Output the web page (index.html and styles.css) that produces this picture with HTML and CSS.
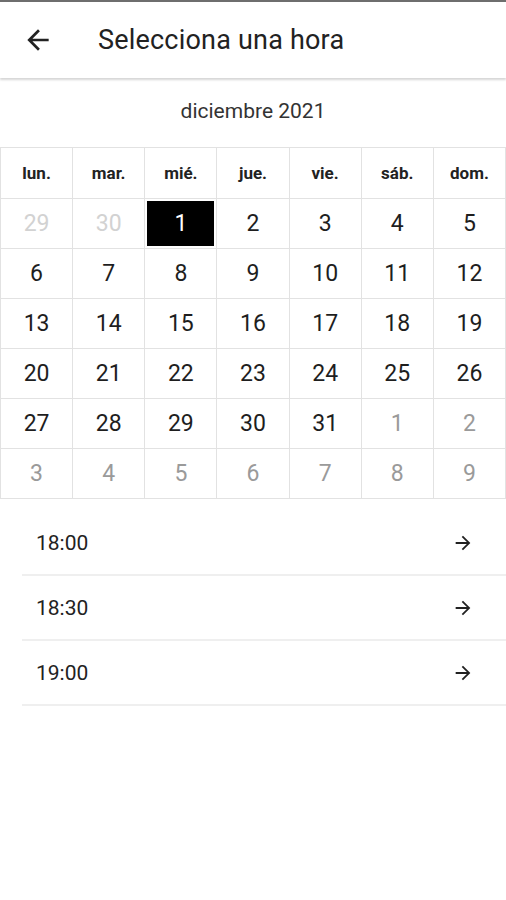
FILE: index.html
```html
<!DOCTYPE html>
<html lang="es">
<head>
  <meta charset="UTF-8">
  <meta name="viewport" content="width=device-width, initial-scale=1.0">
  <title>Selecciona una hora</title>
  <link rel="stylesheet" href="styles.css">
</head>
<body>

  <header class="topbar">
    <button class="back" aria-label="Volver">
      <svg width="32" height="32" viewBox="0 0 24 24"><path d="M20 11H7.83l5.59-5.59L12 4l-8 8 8 8 1.41-1.41L7.83 13H20v-2z" fill="#222"/></svg>
    </button>
    <h1>Selecciona una hora</h1>
  </header>

  <div class="month">diciembre 2021</div>

  <div class="calendar">
    <div class="dow">lun.</div>
    <div class="dow">mar.</div>
    <div class="dow">mié.</div>
    <div class="dow">jue.</div>
    <div class="dow">vie.</div>
    <div class="dow">sáb.</div>
    <div class="dow">dom.</div>

    <div class="day past">29</div>
    <div class="day past">30</div>
    <div class="day"><span class="selected">1</span></div>
    <div class="day">2</div>
    <div class="day">3</div>
    <div class="day">4</div>
    <div class="day">5</div>

    <div class="day">6</div>
    <div class="day">7</div>
    <div class="day">8</div>
    <div class="day">9</div>
    <div class="day">10</div>
    <div class="day">11</div>
    <div class="day">12</div>

    <div class="day">13</div>
    <div class="day">14</div>
    <div class="day">15</div>
    <div class="day">16</div>
    <div class="day">17</div>
    <div class="day">18</div>
    <div class="day">19</div>

    <div class="day">20</div>
    <div class="day">21</div>
    <div class="day">22</div>
    <div class="day">23</div>
    <div class="day">24</div>
    <div class="day">25</div>
    <div class="day">26</div>

    <div class="day">27</div>
    <div class="day">28</div>
    <div class="day">29</div>
    <div class="day">30</div>
    <div class="day">31</div>
    <div class="day other">1</div>
    <div class="day other">2</div>

    <div class="day other">3</div>
    <div class="day other">4</div>
    <div class="day other">5</div>
    <div class="day other">6</div>
    <div class="day other">7</div>
    <div class="day other">8</div>
    <div class="day other">9</div>
  </div>

  <ul class="times">
    <li><span>18:00</span><svg width="22" height="22" viewBox="0 0 24 24"><path d="M12 4l-1.41 1.41L16.17 11H4v2h12.17l-5.58 5.59L12 20l8-8z" fill="#222"/></svg></li>
    <li><span>18:30</span><svg width="22" height="22" viewBox="0 0 24 24"><path d="M12 4l-1.41 1.41L16.17 11H4v2h12.17l-5.58 5.59L12 20l8-8z" fill="#222"/></svg></li>
    <li><span>19:00</span><svg width="22" height="22" viewBox="0 0 24 24"><path d="M12 4l-1.41 1.41L16.17 11H4v2h12.17l-5.58 5.59L12 20l8-8z" fill="#222"/></svg></li>
  </ul>

</body>
</html>
```

FILE: styles.css
```css
body {
  margin: 0;
  font-family: Roboto, "Liberation Sans", sans-serif;
  background: #fff;
  color: #222;
}
.topbar {
  display: flex;
  align-items: center;
  height: 76px;
  border-top: 2px solid #6e6e6e;
  box-shadow: 0 2px 2px rgba(0,0,0,0.16);
  position: relative;
}
.back {
  background: none;
  border: none;
  padding: 0;
  margin-left: 22px;
  width: 32px;
  height: 32px;
  display: flex;
  cursor: pointer;
}
.topbar h1 {
  margin: 0 0 0 44px;
  font-size: 27px;
  font-weight: 400;
  letter-spacing: 0.2px;
  color: #222;
}
.month {
  height: 69px;
  line-height: 67px;
  text-align: center;
  font-size: 21px;
  color: #333;
}
.calendar {
  display: grid;
  grid-template-columns: repeat(7, 1fr);
  grid-template-rows: 51px repeat(6, 50px);
  border-top: 1px solid #e2e2e2;
  border-left: 1px solid #e2e2e2;
}
.dow, .day {
  display: flex;
  align-items: center;
  justify-content: center;
  border-right: 1px solid #e2e2e2;
  border-bottom: 1px solid #e2e2e2;
}
.dow {
  font-size: 17px;
  font-weight: 700;
  color: #222;
}
.day {
  font-size: 23px;
  color: #1e1e1e;
}
.day.past {
  color: #d2d2d2;
}
.day.other {
  color: #9a9a9a;
}
.selected {
  display: flex;
  align-items: center;
  justify-content: center;
  width: calc(100% - 4px);
  height: calc(100% - 4px);
  background: #000;
  color: #fff;
}
.times {
  list-style: none;
  margin: 12px 0 0 22px;
  padding: 0;
}
.times li {
  display: flex;
  align-items: center;
  justify-content: space-between;
  height: 63px;
  padding: 0 32px 0 14px;
  border-bottom: 2px solid #efefef;
  font-size: 21px;
  color: #222;
}
```
